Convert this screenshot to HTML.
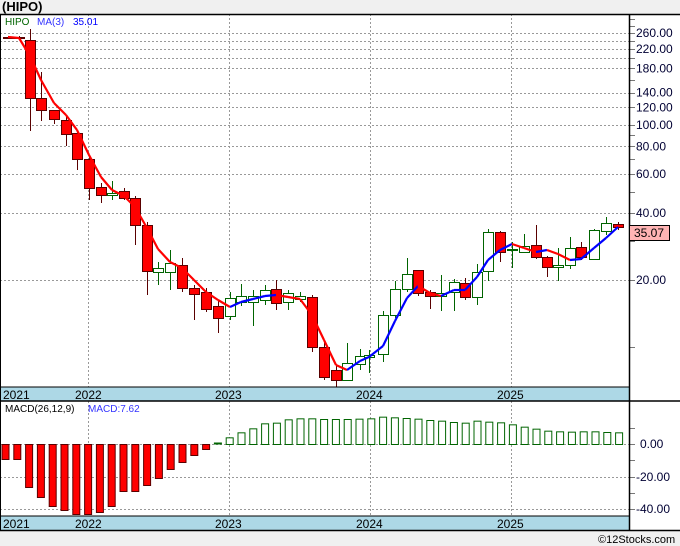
<!DOCTYPE html>
<html><head><meta charset="utf-8">
<style>
body{margin:0;background:#f0f0f0;width:680px;height:546px;overflow:hidden;font-family:"Liberation Sans",sans-serif}
svg{position:absolute;left:0;top:0}
</style></head><body>
<svg id="s" width="680" height="546" xmlns="http://www.w3.org/2000/svg" font-family="Liberation Sans, sans-serif">
<rect x="0" y="0" width="680" height="546" fill="#f0f0f0"/>
<rect x="0" y="14" width="680" height="517" fill="#fff"/>
<text x="2" y="11" font-size="13" font-weight="bold" fill="#000">(HIPO)</text>
<g id="g"></g>
<rect x="0" y="387" width="630" height="14" fill="#add8e6"/>
<rect x="0" y="516" width="630" height="14" fill="#add8e6"/>
<g font-size="12" fill="#000">
<text x="3" y="399">2021</text><text x="75" y="399">2022</text><text x="215" y="399">2023</text><text x="356" y="399">2024</text><text x="497" y="399">2025</text>
<text x="3" y="528">2021</text><text x="75" y="528">2022</text><text x="215" y="528">2023</text><text x="356" y="528">2024</text><text x="497" y="528">2025</text>
</g>
<line x1="0" y1="14.5" x2="680" y2="14.5" stroke="#000" stroke-width="1.5"/>
<line x1="0" y1="387" x2="630" y2="387" stroke="#000"/>
<line x1="0" y1="401" x2="680" y2="401" stroke="#000" stroke-width="1.5"/>
<line x1="0" y1="516" x2="630" y2="516" stroke="#000"/>
<line x1="0" y1="530.5" x2="680" y2="530.5" stroke="#000" stroke-width="1.5"/>
<line x1="629.5" y1="14" x2="629.5" y2="531" stroke="#000" stroke-width="1.5"/>
<line x1="0.5" y1="14" x2="0.5" y2="531" stroke="#000"/>
<text x="5" y="25" font-size="10" fill="#006400">HIPO</text>
<text x="37" y="25" font-size="10" fill="#3333ff">MA(3)</text>
<text x="73" y="25" font-size="10" fill="#0000ff">35.01</text>
<text x="5" y="412" font-size="10" fill="#000">MACD(26,12,9)</text>
<text x="88" y="412" font-size="10" fill="#3333ff">MACD:7.62</text>
<rect x="629.5" y="225.5" width="40" height="15" fill="#ffb4b4" stroke="#000"/>
<text x="634" y="237" font-size="12" fill="#000">35.07</text>
<text x="598" y="543" font-size="11" fill="#000">©12Stocks.com</text>
</svg>
<script>
var g=document.getElementById('g'),h='';
function L(x1,y1,x2,y2,s,w,d){h+='<line x1="'+x1+'" y1="'+y1+'" x2="'+x2+'" y2="'+y2+'" stroke="'+s+'" stroke-width="'+(w||1)+'"'+(d?' stroke-dasharray="'+d+'"':'')+'/>';}
function T(x,y,t){h+='<text x="'+x+'" y="'+y+'" font-size="12" fill="#000033">'+t+'</text>';}
function Y(p){return 280-96.3*Math.log(p/20);}
[260,240,220,200,180,140,120,100,80,60,40,20].forEach(function(p){var y=Math.round(Y(p))+.5;L(0,y,630,y,'#999',1,'2,2');});
[260,220,180,140,120,100,80,60,40,20].forEach(function(p){T(636,Y(p)+4,p.toFixed(2));});
for(var p=10;p<=300;p+=(p<100?10:20)){var y=Y(p);if(y>14&&y<387)L(630,Math.round(y)+.5,635,Math.round(y)+.5,'#777');}
[88,229,370,511].forEach(function(x){L(x+.5,14,x+.5,387,'#999',1,'2,2');L(x+.5,401,x+.5,516,'#999',1,'2,2');});
[444,477,509].forEach(function(y){L(0,y+.5,630,y+.5,'#999',1,'2,2');});
[[444,'0.00'],[477,'-20.00'],[509,'-40.00']].forEach(function(a){T(a[1]=='0.00'?640:636,a[0]+4,a[1]);L(630,a[0]+.5,635,a[0]+.5,'#777');});
[428,460,493].forEach(function(y){L(630,y+.5,635,y+.5,'#777');});
var C=[[8,36,38,37,37,0],[19,36,38,37,38,0],[30,29,131,40,98,0],[41,72,121,98,110,0],[54,116,124,110,119,0],[66,116,146,120,134,0],[77,131,170,133,159,0],[89,155,200,159,188,0],[101,183,203,187,195,0],[112,181,200,193,195,1],[124,188,200,191,198,0],[135,196,245,198,225,0],[147,222,295,225,271,0],[158,262,285,268,272,1],[170,250,290,263,272,1],[182,258,292,265,288,0],[194,285,320,288,294,0],[206,288,312,292,309,0],[218,300,333,306,318,0],[230,292,320,298,316,1],[241,284,306,296,302,1],[253,290,326,296,302,1],[265,285,305,290,300,1],[276,280,310,289,303,0],[288,290,310,293,302,1],[300,292,302,296,299,1],[312,295,352,297,347,0],[324,342,380,347,377,0],[336,366,387,370,380,0],[347,343,381,363,380,1],[360,349,370,356,364,1],[369,350,373,355,357,1],[383,311,362,315,354,1],[395,281,318,289,315,1],[407,258,292,274,289,1],[418,270,296,270,293,0],[430,290,309,292,296,0],[441,275,311,293,296,1],[454,279,311,282,292,1],[465,278,300,283,297,0],[477,264,305,272,297,1],[488,229,281,232,271,1],[500,231,262,232,252,0],[512,242,268,249,250,1],[524,234,253,246,252,1],[536,225,259,245,257,0],[547,256,277,257,267,0],[558,248,281,265,267,1],[570,237,269,248,265,1],[581,242,260,247,257,0],[594,229,260,230,259,1],[606,217,235,223,231,1],[618,222,230,224,227,0]];
C.forEach(function(c){var x=c[0],up=c[5],t=Math.min(c[3],c[4]),b=Math.max(c[3],c[4]);
 L(x+.5,c[1],x+.5,c[2],up?'#006400':'#5a0000');
 var hh=Math.max(b-t,1);
 h+='<rect x="'+(x-4.5)+'" y="'+(t+.5)+'" width="10" height="'+hh+'" fill="'+(up?'#fff':'#ff0000')+'" stroke="'+(up?'#006400':'#5a0000')+'"/>';});
var M=[[8,37],[19,38],[30,56],[41,80],[54,103],[66,115],[77,130],[89,155],[101,177],[112,190],[124,196],[135,207],[147,228],[158,249],[170,262],[182,268],[194,280],[206,292],[218,300],[230,307],[241,302],[253,299],[265,296],[276,295],[288,297],[300,299],[312,315],[324,340],[336,365],[347,370],[360,361],[369,357],[383,346],[395,321],[407,298],[418,286],[430,293],[441,296],[454,290],[465,290],[477,277],[488,260],[500,250],[512,244],[524,248],[536,252],[547,250],[558,254],[570,260],[581,259],[594,248],[606,238],[618,227]];
for(var i=1;i<M.length;i++){L(M[i-1][0],M[i-1][1],M[i][0],M[i][1],M[i][1]<=M[i-1][1]?'#0000ff':'#ff0000',2.2);}
var S=11.8;
var R=[459,459,487,497,506,510,514,514,512,506,491,491,485,478,469,462,455,449];
R.forEach(function(b,i){var x=1.5+i*S;h+='<rect x="'+(x+.5)+'" y="444.5" width="7" height="'+(b-444)+'" fill="#ff0000" stroke="#5a0000"/>';});
L(1.5+18*S,443.5,1.5+18*S+8,443.5,'#006400',2);
var G=[172,157,145,130,128,118,115,115,117,117,117,116,115,110,112,114,116,120,122,126,128,122,125,127,133,140,146,152,154,155,154,154,156,157];
G.forEach(function(t,i){var x=1.5+(19+i)*S,y=380+t/3;if(x>622)return;h+='<rect x="'+(x+.5)+'" y="'+(y+.5)+'" width="7" height="'+(444-y)+'" fill="#fff" stroke="#006400"/>';});
g.innerHTML=h;
</script>
</body></html>
